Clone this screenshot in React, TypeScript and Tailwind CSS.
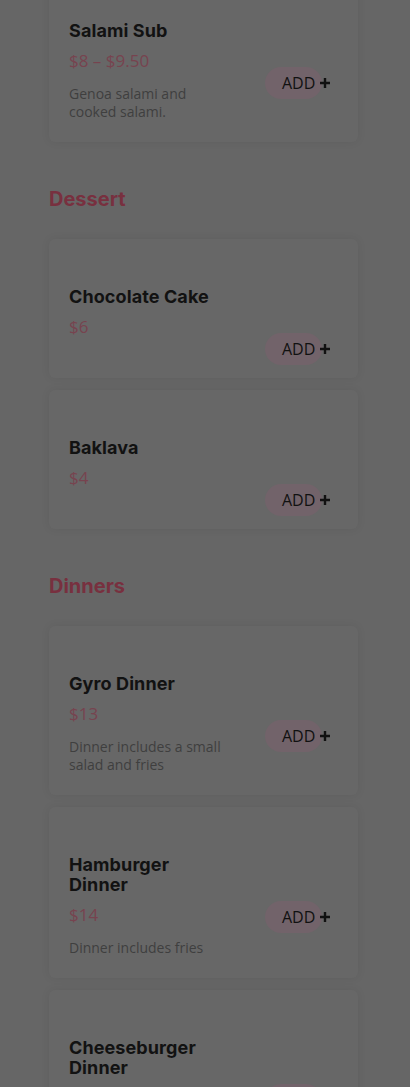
import * as React from 'react';

type Item = { name: string; price: string; desc?: string };
type Section = { title?: string; items: Item[] };

const sections: Section[] = [
  { items: [{ name: 'Salami Sub', price: '$8 – $9.50', desc: 'Genoa salami and cooked salami.' }] },
  {
    title: 'Dessert',
    items: [
      { name: 'Chocolate Cake', price: '$6' },
      { name: 'Baklava', price: '$4' },
    ],
  },
  {
    title: 'Dinners',
    items: [
      { name: 'Gyro Dinner', price: '$13', desc: 'Dinner includes a small salad and fries' },
      { name: 'Hamburger Dinner', price: '$14', desc: 'Dinner includes fries' },
      { name: 'Cheeseburger Dinner', price: '$15', desc: 'Dinner includes fries' },
    ],
  },
];

const Plus = () => (
  <svg width="12" height="12" viewBox="0 0 12 12" className="shrink-0">
    <path d="M6 1v10M1 6h10" stroke="#111" strokeWidth="2.4" />
  </svg>
);

const MenuCard = ({ item }: { item: Item }) => (
  <div className="flex justify-between rounded-md bg-[#676767] px-5 pt-[48px] pb-[13px] shadow-[0_0_10px_rgba(0,0,0,0.07)]">
    <div className="w-[158px]">
      <h3 className="text-[18px] leading-[20px] font-bold text-[#121212] font-['Inter',sans-serif] tracking-[0.1px]">
        {item.name}
      </h3>
      <p className="mt-2 text-[17px] leading-6 text-[#77434f] font-['Open_Sans',sans-serif]">{item.price}</p>
      {item.desc && (
        <p className="mt-3 mb-2 text-[14px] leading-[18px] text-[#3f3f3f] font-['Open_Sans',sans-serif]">
          {item.desc}
        </p>
      )}
    </div>
    <div className="w-[73px] pt-[46px]">
      <button className="flex h-8 w-[57px] items-center whitespace-nowrap rounded-full bg-[#72636a] pl-[17px] font-['Open_Sans',sans-serif] text-[16px] text-[#111]">
        <span>ADD</span>
        <span className="ml-1">
          <Plus />
        </span>
      </button>
    </div>
  </div>
);

export default function App() {
  return (
    <div className="h-[1087px] w-[410px] overflow-hidden bg-[#666666]">
      <div className="-mt-[27px] ml-[49px] w-[309px]">
        {sections.map((s, i) => (
          <div key={i} className={i > 0 ? 'mt-[43px]' : ''}>
            {s.title && (
              <h2 className="mb-[26px] text-[20px] leading-7 font-bold text-[#78303f] font-['Inter',sans-serif]">
                {s.title}
              </h2>
            )}
            <div className="flex flex-col gap-3">
              {s.items.map((it) => (
                <MenuCard key={it.name} item={it} />
              ))}
            </div>
          </div>
        ))}
      </div>
    </div>
  );
}
